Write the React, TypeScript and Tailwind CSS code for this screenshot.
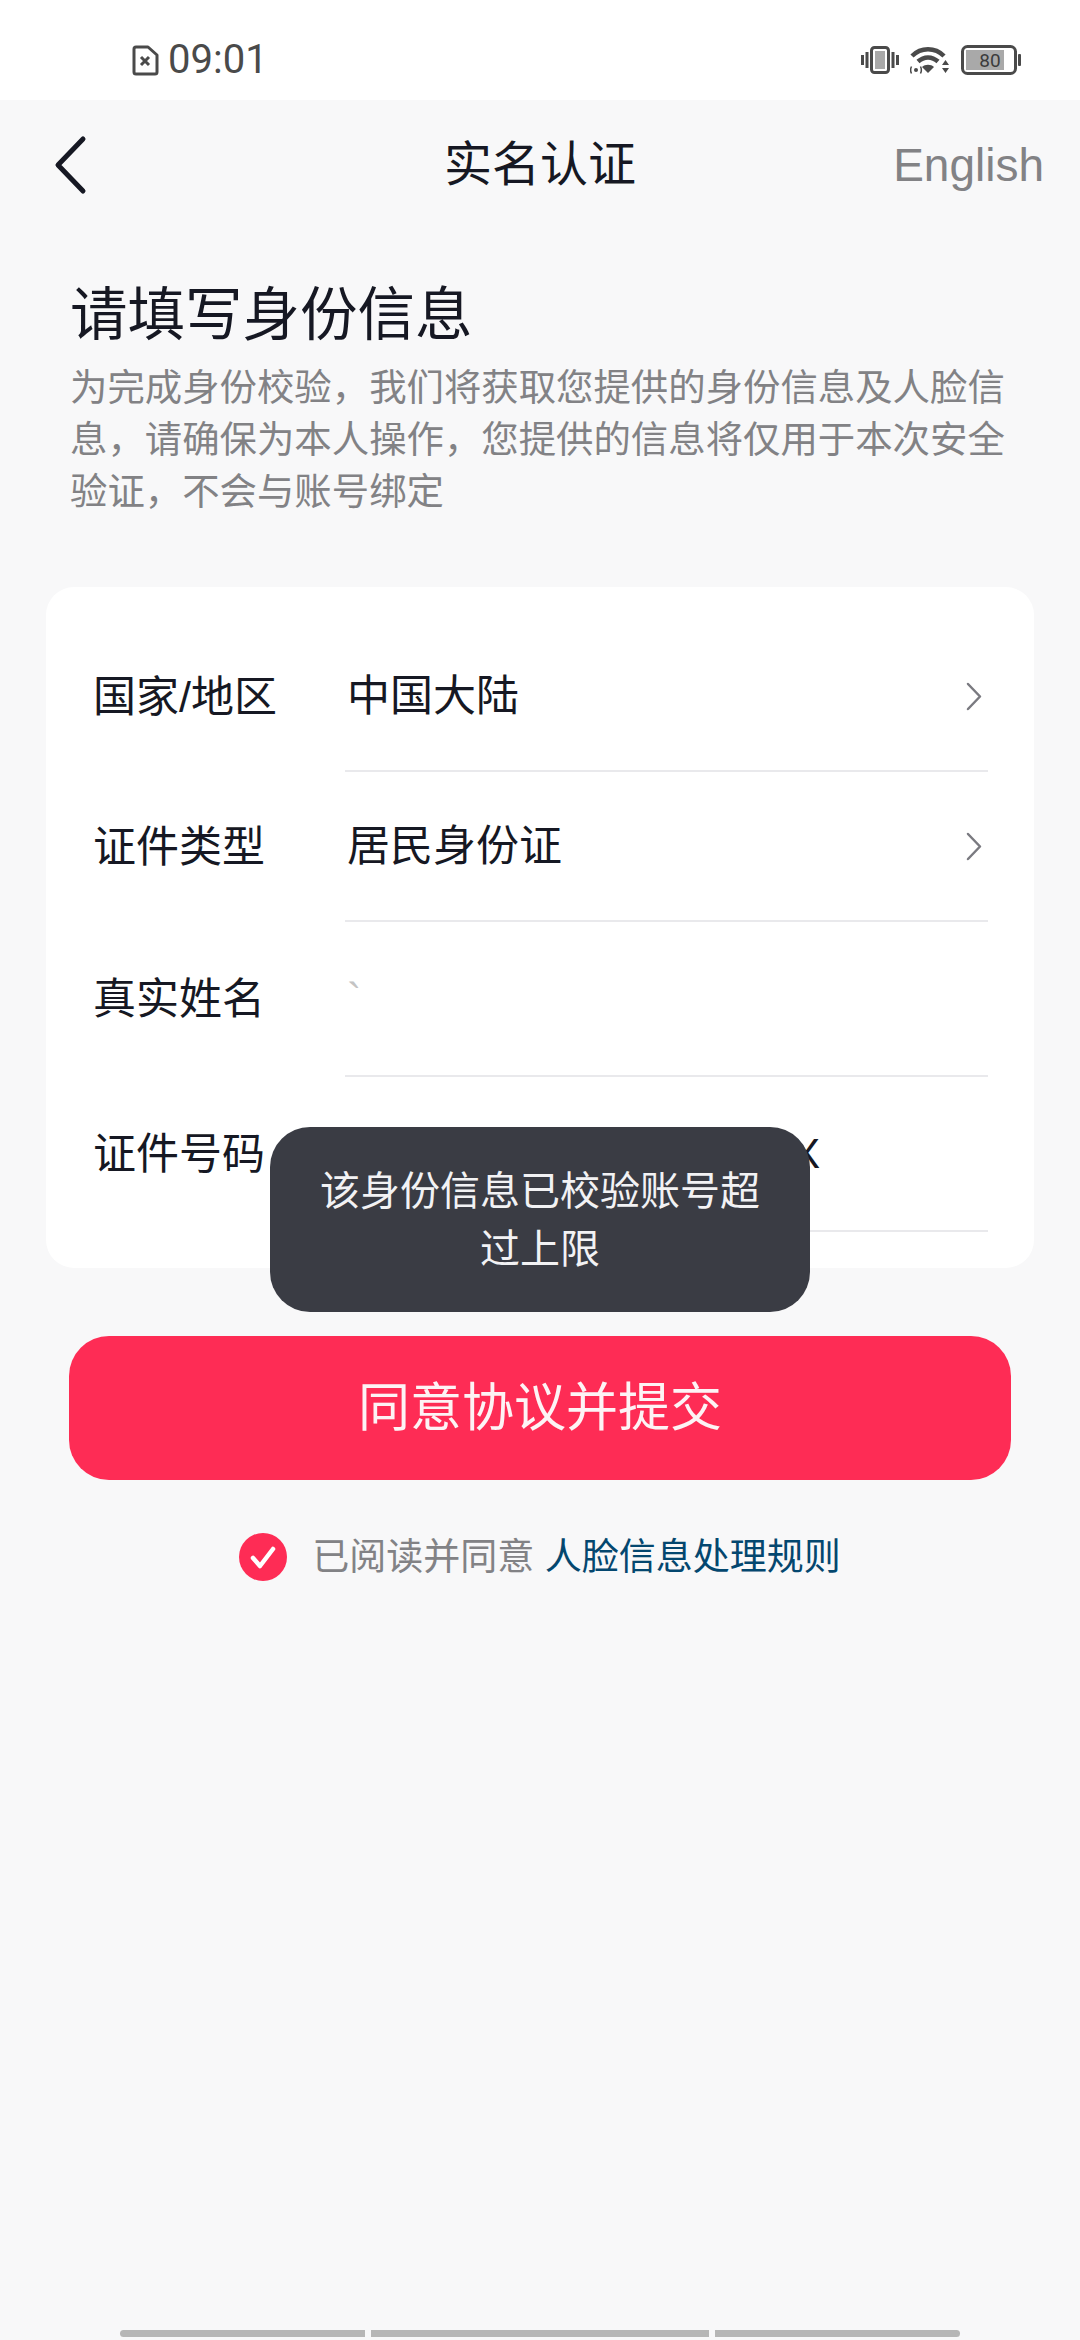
const CJK = "font-['Liberation_Sans','Noto_Sans_CJK_SC',sans-serif]";

function SimIcon() {
  return (
    <svg width="27" height="31" viewBox="0 0 27 31" fill="none" className="shrink-0">
      <path d="M4 2h12l9 8v17a2 2 0 0 1-2 2H4a2 2 0 0 1-2-2V4a2 2 0 0 1 2-2z" stroke="#4a4a4a" strokeWidth="3" strokeLinejoin="round" />
      <path d="M9 12l8 8M17 12l-8 8" stroke="#4a4a4a" strokeWidth="3" />
    </svg>
  );
}

function VibrateIcon() {
  return (
    <svg width="38" height="28" viewBox="0 0 38 28" fill="none">
      <rect x="10.5" y="1.5" width="17" height="25" rx="3" stroke="#4a4a4a" strokeWidth="3" />
      <rect x="14" y="5" width="10" height="18" fill="#a9a9a9" />
      <path d="M1.5 9v10M6 6v16M32 6v16M36.5 9v10" stroke="#4a4a4a" strokeWidth="3" />
    </svg>
  );
}

function WifiIcon() {
  return (
    <svg width="40" height="28" viewBox="0 0 40 28" fill="none">
      <path d="M2 10C11 1 25 1 34 10" stroke="#4a4a4a" strokeWidth="4.5" />
      <path d="M8 15.5C14 10 22 10 28 15.5" stroke="#4a4a4a" strokeWidth="4.5" />
      <path d="M12 21l6 6 6-6c-3-3-9-3-12 0z" fill="#4a4a4a" />
      <circle cx="6" cy="24" r="2" fill="#4a4a4a" />
      <path d="M1.5 20.5c-1 2-1 5 0 7M10.5 20.5c1 2 1 5 0 7" stroke="#4a4a4a" strokeWidth="1.5" />
      <path d="M35.5 14l3.5 5h-7zM32 22h7l-3.5 5z" fill="#4a4a4a" />
    </svg>
  );
}

function BatteryIcon() {
  return (
    <svg width="60" height="30" viewBox="0 0 60 30" fill="none">
      <rect x="1.5" y="1.5" width="53" height="27" rx="5" stroke="#4a4a4a" strokeWidth="3" />
      <rect x="5" y="5" width="38" height="20" fill="#a9a9a9" />
      <rect x="57" y="9" width="3" height="12" rx="1" fill="#4a4a4a" />
      <text x="29" y="22" textAnchor="middle" fontFamily="Roboto, sans-serif" fontSize="19" fill="#3c3c3c">80</text>
    </svg>
  );
}

function RowArrow() {
  return (
    <svg width="17" height="29" viewBox="0 0 17 29" fill="none" className="mr-[5px] shrink-0">
      <path d="M2 2l12 12.500L2 27" stroke="#7a7a80" strokeWidth="2.500" strokeLinecap="round" strokeLinejoin="round" />
    </svg>
  );
}

function Row({ label, value, arrow, className }: { label: string; value?: React.ReactNode; arrow?: boolean; className?: string }) {
  return (
    <div className={`flex ${className ?? ''}`}>
      <div className="flex w-[299px] shrink-0 items-center pl-[47px] text-[#161823]">{label}</div>
      <div className="flex min-w-0 flex-1 items-center justify-between border-b-2 border-[#e9e9ec] pl-[2px]">
        <span className="text-[#161823]">{value}</span>
        {arrow && <RowArrow />}
      </div>
    </div>
  );
}

export default function App() {
  return (
    <div lang="zh-CN" className={`flex h-[2340px] w-[1080px] flex-col overflow-hidden bg-[#f8f8f9] ${CJK}`}>
      {/* status bar */}
      <div className="flex h-[100px] items-center justify-between bg-white pl-[132px] pr-[59px] pt-[20px]">
        <div className="flex items-center gap-[9px] font-['Roboto',sans-serif] text-[40px] leading-none text-[#4a4a4a]">
          <SimIcon />
          <span>09:01</span>
        </div>
        <div className="flex items-center gap-[11px]">
          <VibrateIcon />
          <WifiIcon />
          <BatteryIcon />
        </div>
      </div>

      {/* nav */}
      <div className="relative flex h-[130px] items-center justify-between pl-[52px] pr-[36px]">
        <svg width="36" height="60" viewBox="0 0 36 60" fill="none">
          <path d="M31 4L6 30l25 26" stroke="#161823" strokeWidth="5" strokeLinecap="round" strokeLinejoin="round" />
        </svg>
        <div className="absolute left-0 right-0 text-center text-[48px] leading-none text-[#161823]">实名认证</div>
        <span className="text-[46px] leading-none text-[#828285]">English</span>
      </div>

      {/* intro */}
      <div className="px-[70px] pt-[52px]">
        <h1 className="text-[57.500px] font-normal leading-[66px] text-[#161823]">请填写身份信息</h1>
        <p className="mt-[14px] whitespace-nowrap text-[37.400px] leading-[52px] text-[#828285]">
          为完成身份校验，我们将获取您提供的身份信息及人脸信
          <br />
          息，请确保为本人操作，您提供的信息将仅用于本次安全
          <br />
          验证，不会与账号绑定
        </p>
      </div>

      {/* form card */}
      <div className="mx-[46px] mt-[69px] flex h-[681px] flex-col rounded-[28px] bg-white pr-[46px] pt-[35px] text-[43px] leading-none">
        <Row className="h-[150px]" label="国家/地区" value="中国大陆" arrow />
        <Row className="h-[150px]" label="证件类型" value="居民身份证" arrow />
        <Row className="h-[155px]" label="真实姓名" value={<span className="text-[#c4c4c4]">`</span>} />
        <Row
          className="h-[155px]"
          label="证件号码"
          value={<span className="whitespace-nowrap tracking-[2.800px]">11010119900101123X</span>}
        />
      </div>

      {/* submit */}
      <button
        type="button"
        className="mx-[69px] mt-[68px] h-[144px] rounded-[40px] bg-[#fe2c55] text-[52px] leading-none text-[#fdf3f5]"
      >
        同意协议并提交
      </button>

      {/* agreement */}
      <div className="mt-[53px] flex items-center justify-center gap-[25px] text-[37px] leading-none">
        <svg width="48" height="48" viewBox="0 0 48 48" className="shrink-0">
          <circle cx="24" cy="24" r="24" fill="#fe2c55" />
          <path d="M14 25l7 8 13-17" fill="none" stroke="#fff" strokeWidth="4.500" strokeLinecap="round" strokeLinejoin="round" />
        </svg>
        <span className="text-[#828285]">
          已阅读并同意 <span className="text-[#04476f]">人脸信息处理规则</span>
        </span>
      </div>

      {/* gesture bar */}
      <div className="mt-auto flex justify-center gap-[6px] pb-[3px]">
        <div className="h-[7px] w-[245px] rounded-l-full rounded-r-[2px] bg-[#b6b6b6]" />
        <div className="h-[7px] w-[338px] bg-[#b6b6b6]" />
        <div className="h-[7px] w-[245px] rounded-l-[2px] rounded-r-full bg-[#b6b6b6]" />
      </div>

      {/* toast */}
      <div className="absolute left-[270px] top-[1127px] flex h-[185px] w-[540px] items-center justify-center rounded-[40px] bg-[#3a3c44] px-[40px] text-center text-[40px] leading-[58px] text-[#f2f2f4]">
        该身份信息已校验账号超过上限
      </div>
    </div>
  );
}
